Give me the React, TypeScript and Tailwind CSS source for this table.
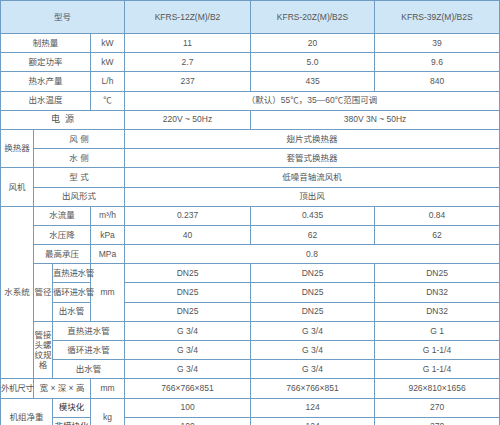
import React from "react";

const td = "border border-[#6f9cc2] text-center align-middle p-0 whitespace-nowrap";

export default function App() {
  return (
    <div className="w-[500px] h-[425px] overflow-hidden bg-white">
      <table
        className="table-fixed border-collapse w-[499px] text-[8.5px] text-[#555555]"
        style={{ fontFamily: '"Liberation Sans", "Noto Sans CJK SC", sans-serif' }}
      >
        <colgroup>
          <col className="w-[33px]" />
          <col className="w-[19px]" />
          <col className="w-[38px]" />
          <col className="w-[34px]" />
          <col className="w-[126px]" />
          <col className="w-[124px]" />
          <col className="w-[125px]" />
        </colgroup>
        <tbody>
          <tr className="h-[33px] bg-[#cfe6f6]">
            <td className={td} colSpan={4}>型号</td>
            <td className={td}>KFRS-12Z(M)/B2</td>
            <td className={td}>KFRS-20Z(M)/B2S</td>
            <td className={td}>KFRS-39Z(M)/B2S</td>
          </tr>
          <tr className="h-[19.2px]">
            <td className={td} colSpan={3}>制热量</td>
            <td className={td}>kW</td>
            <td className={td}>11</td>
            <td className={td}>20</td>
            <td className={td}>39</td>
          </tr>
          <tr className="h-[19.2px]">
            <td className={td} colSpan={3}>额定功率</td>
            <td className={td}>kW</td>
            <td className={td}>2.7</td>
            <td className={td}>5.0</td>
            <td className={td}>9.6</td>
          </tr>
          <tr className="h-[19.2px]">
            <td className={td} colSpan={3}>热水产量</td>
            <td className={td}>L/h</td>
            <td className={td}>237</td>
            <td className={td}>435</td>
            <td className={td}>840</td>
          </tr>
          <tr className="h-[19.2px]">
            <td className={td} colSpan={3}>出水温度</td>
            <td className={td}>℃</td>
            <td className={td} colSpan={3}>（默认）55℃，35—60℃范围可调</td>
          </tr>
          <tr className="h-[19.2px]">
            <td className={`${td} text-[9px]`} colSpan={4}>电&nbsp;&nbsp;源</td>
            <td className={td}>220V ~ 50Hz</td>
            <td className={td} colSpan={2}>380V 3N ~ 50Hz</td>
          </tr>
          <tr className="h-[19.2px]">
            <td className={td} rowSpan={2}>换热器</td>
            <td className={td} colSpan={3}>风&nbsp;侧</td>
            <td className={td} colSpan={3}>翅片式换热器</td>
          </tr>
          <tr className="h-[19.2px]">
            <td className={td} colSpan={3}>水&nbsp;侧</td>
            <td className={td} colSpan={3}>套管式换热器</td>
          </tr>
          <tr className="h-[19.2px]">
            <td className={td} rowSpan={2}>风机</td>
            <td className={td} colSpan={3}>型&nbsp;式</td>
            <td className={td} colSpan={3}>低噪音轴流风机</td>
          </tr>
          <tr className="h-[19.2px]">
            <td className={td} colSpan={3}>出风形式</td>
            <td className={td} colSpan={3}>顶出风</td>
          </tr>
          <tr className="h-[19.2px]">
            <td className={td} rowSpan={9}>水系统</td>
            <td className={td} colSpan={2}>水流量</td>
            <td className={td}>m³/h</td>
            <td className={td}>0.237</td>
            <td className={td}>0.435</td>
            <td className={td}>0.84</td>
          </tr>
          <tr className="h-[19.2px]">
            <td className={td} colSpan={2}>水压降</td>
            <td className={td}>kPa</td>
            <td className={td}>40</td>
            <td className={td}>62</td>
            <td className={td}>62</td>
          </tr>
          <tr className="h-[19.2px]">
            <td className={td} colSpan={2}>最高承压</td>
            <td className={td}>MPa</td>
            <td className={td} colSpan={3}>0.8</td>
          </tr>
          <tr className="h-[19.2px]">
            <td className={td} rowSpan={3}>管径</td>
            <td className={`${td} tracking-[-0.3px]`}>直热进水管</td>
            <td className={td} rowSpan={3}>mm</td>
            <td className={td}>DN25</td>
            <td className={td}>DN25</td>
            <td className={td}>DN25</td>
          </tr>
          <tr className="h-[19.2px]">
            <td className={`${td} tracking-[-0.3px]`}>循环进水管</td>
            <td className={td}>DN25</td>
            <td className={td}>DN25</td>
            <td className={td}>DN32</td>
          </tr>
          <tr className="h-[19.2px]">
            <td className={td}>出水管</td>
            <td className={td}>DN25</td>
            <td className={td}>DN25</td>
            <td className={td}>DN32</td>
          </tr>
          <tr className="h-[19.2px]">
            <td className="border border-[#6f9cc2] text-center align-middle p-0 whitespace-normal break-all leading-[10px]" rowSpan={3}>
              管接头螺纹规格
            </td>
            <td className={td} colSpan={2}>直热进水管</td>
            <td className={td}>G 3/4</td>
            <td className={td}>G 3/4</td>
            <td className={td}>G 1</td>
          </tr>
          <tr className="h-[19.2px]">
            <td className={td} colSpan={2}>循环进水管</td>
            <td className={td}>G 3/4</td>
            <td className={td}>G 3/4</td>
            <td className={td}>G 1-1/4</td>
          </tr>
          <tr className="h-[19.2px]">
            <td className={td} colSpan={2}>出水管</td>
            <td className={td}>G 3/4</td>
            <td className={td}>G 3/4</td>
            <td className={td}>G 1-1/4</td>
          </tr>
          <tr className="h-[19.2px]">
            <td className={`${td} tracking-[-0.4px]`}>外机尺寸</td>
            <td className={td} colSpan={2}>宽 × 深 × 高</td>
            <td className={td}>mm</td>
            <td className={td}>766×766×851</td>
            <td className={td}>766×766×851</td>
            <td className={td}>926×810×1656</td>
          </tr>
          <tr className="h-[19.2px]">
            <td className={td} colSpan={2} rowSpan={2}>机组净重</td>
            <td className={`${td} text-[#333333]`}>模块化</td>
            <td className={td} rowSpan={2}>kg</td>
            <td className={td}>100</td>
            <td className={td}>124</td>
            <td className={td}>270</td>
          </tr>
          <tr className="h-[19.2px]">
            <td className={`${td} text-[#333333]`}>非模块化</td>
            <td className={td}>100</td>
            <td className={td}>124</td>
            <td className={td}>270</td>
          </tr>
        </tbody>
      </table>
    </div>
  );
}
